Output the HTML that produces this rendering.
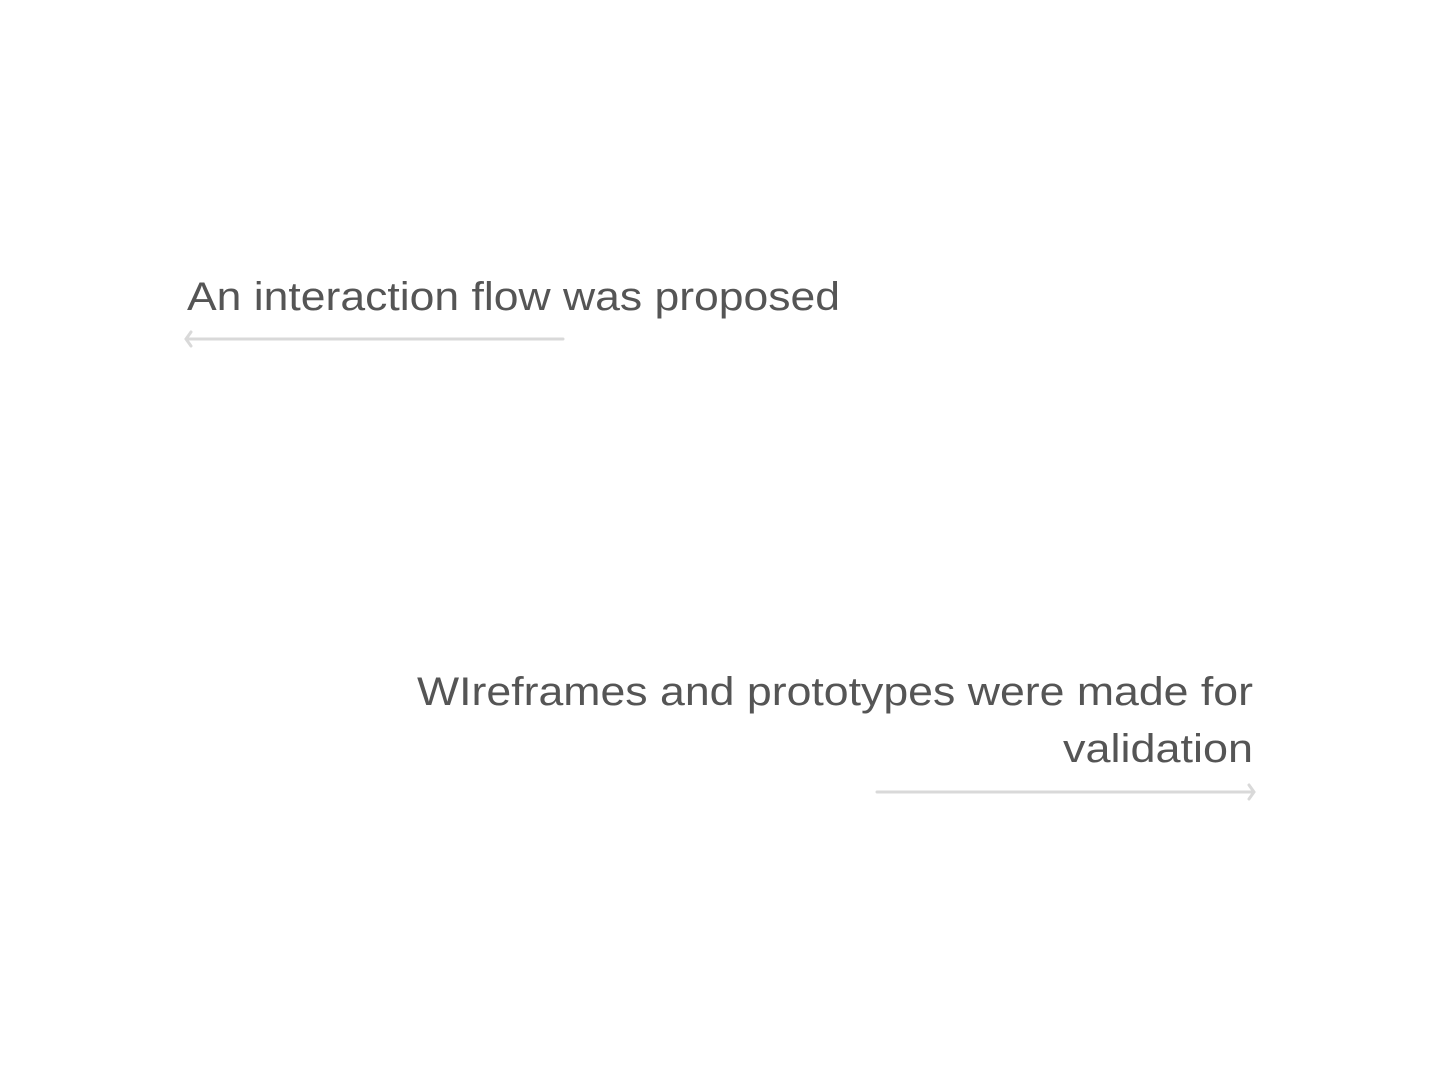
<!DOCTYPE html>
<html><head><style>html,body{margin:0;background:#fff;}</style></head>
<body>
<svg width="1440" height="1080" xmlns="http://www.w3.org/2000/svg" style="display:block">
<g font-family="Liberation Sans, sans-serif" font-size="40" fill="#555">
<text x="187" y="310" textLength="653" lengthAdjust="spacingAndGlyphs">An interaction flow was proposed</text>
<text x="417" y="705" textLength="836" lengthAdjust="spacingAndGlyphs">WIreframes and prototypes were made for</text>
<text x="1063" y="762" textLength="190" lengthAdjust="spacingAndGlyphs">validation</text>
</g>
<g stroke="#d9d9d9" stroke-width="3" fill="none" stroke-linecap="round">
<line x1="187" y1="339" x2="563" y2="339"/>
<path d="M191 332 L186 339 L191 346"/>
<line x1="877" y1="792" x2="1253" y2="792"/>
<path d="M1249 785 L1254 792 L1249 799"/>
</g>
</svg>
</body></html>
